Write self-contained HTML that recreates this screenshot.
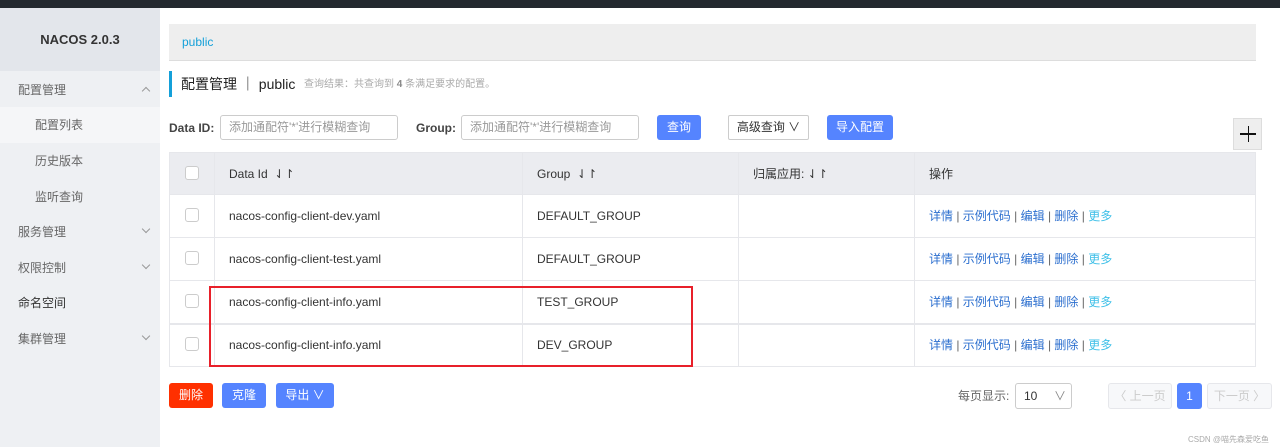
<!DOCTYPE html>
<html><head><meta charset="utf-8"><style>
*{box-sizing:border-box;margin:0;padding:0}
body{width:1280px;height:447px;overflow:hidden;background:#fff;font-family:"Liberation Sans","Noto Sans CJK SC",sans-serif;font-size:12px;color:#333;position:relative;line-height:14px}
.a{position:absolute}
.top{left:0;top:0;width:1280px;height:8px;background:#24292f}
.side{left:0;top:8px;width:160px;height:439px;background:#eef0f3}
.logo{left:0;top:8px;width:160px;height:63px;background:#e3e6eb;text-align:center;line-height:63px;font-weight:bold;font-size:13px;color:#333}
.mi{left:18px;font-size:12px;color:#666}
.sub{left:35px;font-size:12px;color:#666}
.chev{left:143px;width:6px;height:6px;border-right:1px solid #999;border-bottom:1px solid #999;transform:rotate(45deg)}
.chev.up{transform:rotate(225deg)}
.bc{left:169px;top:24px;width:1087px;height:37px;background:#eee;border-bottom:1px solid #ddd;color:#14a0d9;padding-left:13px;line-height:37px;font-size:12px}
.cb{width:14px;height:14px;border:1px solid #ccc;border-radius:3px;background:#fff}
.btn{color:#fff;text-align:center;border-radius:3px;font-size:12px}
.inp{border:1px solid #ccc;border-radius:3px;height:25px;line-height:23px;padding-left:8px;color:#999}
.op{left:929px;color:#2c6fcf}
.op span{color:#666}
.op i{font-style:normal;color:#3fc0e8}
.vl{width:1px;background:#e6e7eb}
.hl{height:1px;background:#e6e7eb;left:169px;width:1087px}
</style></head><body>
<div class="a top"></div>
<div class="a side"></div>
<div class="a logo">NACOS 2.0.3</div>
<div class="a mi" style="top:83px">配置管理</div><div class="a chev up" style="top:88px"></div>
<div class="a" style="left:0;top:107px;width:160px;height:36px;background:#f5f6f8"></div>
<div class="a sub" style="top:118px">配置列表</div>
<div class="a sub" style="top:154px">历史版本</div>
<div class="a sub" style="top:190px">监听查询</div>
<div class="a mi" style="top:225px">服务管理</div><div class="a chev" style="top:226px"></div>
<div class="a mi" style="top:261px">权限控制</div><div class="a chev" style="top:262px"></div>
<div class="a mi" style="top:296px;color:#333">命名空间</div>
<div class="a mi" style="top:332px">集群管理</div><div class="a chev" style="top:333px"></div>

<div class="a bc">public</div>
<div class="a" style="left:169px;top:71px;width:3px;height:26px;background:#14a0d9"></div>
<div class="a" style="left:181px;top:76px;font-size:14px;line-height:17px;color:#222">配置管理 ｜ public</div>
<div class="a" style="left:304px;top:78px;font-size:10px;color:#aaa">查询结果：共查询到 <b style="color:#888">4</b> 条满足要求的配置。</div>

<div class="a" style="left:169px;top:121px;font-weight:bold;color:#444">Data ID:</div>
<div class="a inp" style="left:220px;top:115px;width:178px">添加通配符'*'进行模糊查询</div>
<div class="a" style="left:416px;top:121px;font-weight:bold;color:#444">Group:</div>
<div class="a inp" style="left:461px;top:115px;width:178px">添加通配符'*'进行模糊查询</div>
<div class="a btn" style="left:657px;top:115px;width:44px;height:25px;line-height:25px;background:#5584ff">查询</div>
<div class="a" style="left:728px;top:115px;width:81px;height:25px;line-height:23px;border:1px solid #ccc;border-radius:2px;text-align:center;color:#333">高级查询 ∨</div>
<div class="a btn" style="left:827px;top:115px;width:66px;height:25px;line-height:25px;background:#5584ff">导入配置</div>
<div class="a" style="left:1233px;top:118px;width:29px;height:32px;background:#eee;border:1px solid #ddd"><div class="a" style="left:6px;top:14px;width:16px;height:1.5px;background:#111"></div><div class="a" style="left:13.5px;top:7px;width:1.5px;height:16px;background:#111"></div></div>

<div class="a" style="left:169px;top:152px;width:1087px;height:43px;background:#ebecf0"></div>
<div class="a hl" style="top:152px"></div>
<div class="a hl" style="top:194px"></div>
<div class="a hl" style="top:237px"></div>
<div class="a hl" style="top:280px"></div>
<div class="a hl" style="top:323px;height:2px"></div>
<div class="a hl" style="top:366px"></div>
<div class="a vl" style="left:169px;top:152px;height:215px"></div>
<div class="a vl" style="left:214px;top:152px;height:215px"></div>
<div class="a vl" style="left:522px;top:152px;height:215px"></div>
<div class="a vl" style="left:738px;top:152px;height:215px"></div>
<div class="a vl" style="left:914px;top:152px;height:215px"></div>
<div class="a vl" style="left:1255px;top:152px;height:215px"></div>

<div class="a cb" style="left:185px;top:166px"></div>
<div class="a" style="left:229px;top:167px;color:#333">Data Id&nbsp; ⇃↾</div>
<div class="a" style="left:537px;top:167px;color:#333">Group&nbsp; ⇃↾</div>
<div class="a" style="left:753px;top:167px;color:#333">归属应用: ⇃↾</div>
<div class="a" style="left:929px;top:167px;color:#333">操作</div>

<div class="a cb" style="left:185px;top:208px"></div>
<div class="a" style="left:229px;top:209px">nacos-config-client-dev.yaml</div>
<div class="a" style="left:537px;top:209px">DEFAULT_GROUP</div>
<div class="a op" style="top:209px">详情 <span>|</span> 示例代码 <span>|</span> 编辑 <span>|</span> 删除 <span>|</span> <i>更多</i></div>

<div class="a cb" style="left:185px;top:251px"></div>
<div class="a" style="left:229px;top:252px">nacos-config-client-test.yaml</div>
<div class="a" style="left:537px;top:252px">DEFAULT_GROUP</div>
<div class="a op" style="top:252px">详情 <span>|</span> 示例代码 <span>|</span> 编辑 <span>|</span> 删除 <span>|</span> <i>更多</i></div>

<div class="a cb" style="left:185px;top:294px"></div>
<div class="a" style="left:229px;top:295px">nacos-config-client-info.yaml</div>
<div class="a" style="left:537px;top:295px">TEST_GROUP</div>
<div class="a op" style="top:295px">详情 <span>|</span> 示例代码 <span>|</span> 编辑 <span>|</span> 删除 <span>|</span> <i>更多</i></div>

<div class="a cb" style="left:185px;top:337px"></div>
<div class="a" style="left:229px;top:338px">nacos-config-client-info.yaml</div>
<div class="a" style="left:537px;top:338px">DEV_GROUP</div>
<div class="a op" style="top:338px">详情 <span>|</span> 示例代码 <span>|</span> 编辑 <span>|</span> 删除 <span>|</span> <i>更多</i></div>

<div class="a" style="left:209px;top:286px;width:484px;height:81px;border:2px solid #e8202a"></div>

<div class="a btn" style="left:169px;top:383px;width:44px;height:25px;line-height:25px;background:#ff3000">删除</div>
<div class="a btn" style="left:222px;top:383px;width:44px;height:25px;line-height:25px;background:#5584ff">克隆</div>
<div class="a btn" style="left:276px;top:383px;width:58px;height:25px;line-height:25px;background:#5584ff">导出 ∨</div>

<div class="a" style="left:958px;top:389px;color:#666">每页显示:</div>
<div class="a" style="left:1015px;top:383px;width:57px;height:26px;border:1px solid #ccc;border-radius:3px;line-height:24px;padding-left:8px;color:#333">10<span style="position:absolute;left:38px;color:#888">∨</span></div>
<div class="a" style="left:1108px;top:383px;width:64px;height:26px;border:1px solid #e6e7eb;border-radius:3px;background:#f7f8fa;line-height:24px;text-align:center;color:#ccc">〈 上一页</div>
<div class="a btn" style="left:1177px;top:383px;width:25px;height:26px;line-height:26px;background:#5584ff">1</div>
<div class="a" style="left:1207px;top:383px;width:65px;height:26px;border:1px solid #e6e7eb;border-radius:3px;background:#f7f8fa;line-height:24px;text-align:center;color:#ccc">下一页 〉</div>
<div class="a" style="left:1188px;top:433px;font-size:8px;color:#aaa">CSDN @喵先森爱吃鱼</div>
</body></html>
